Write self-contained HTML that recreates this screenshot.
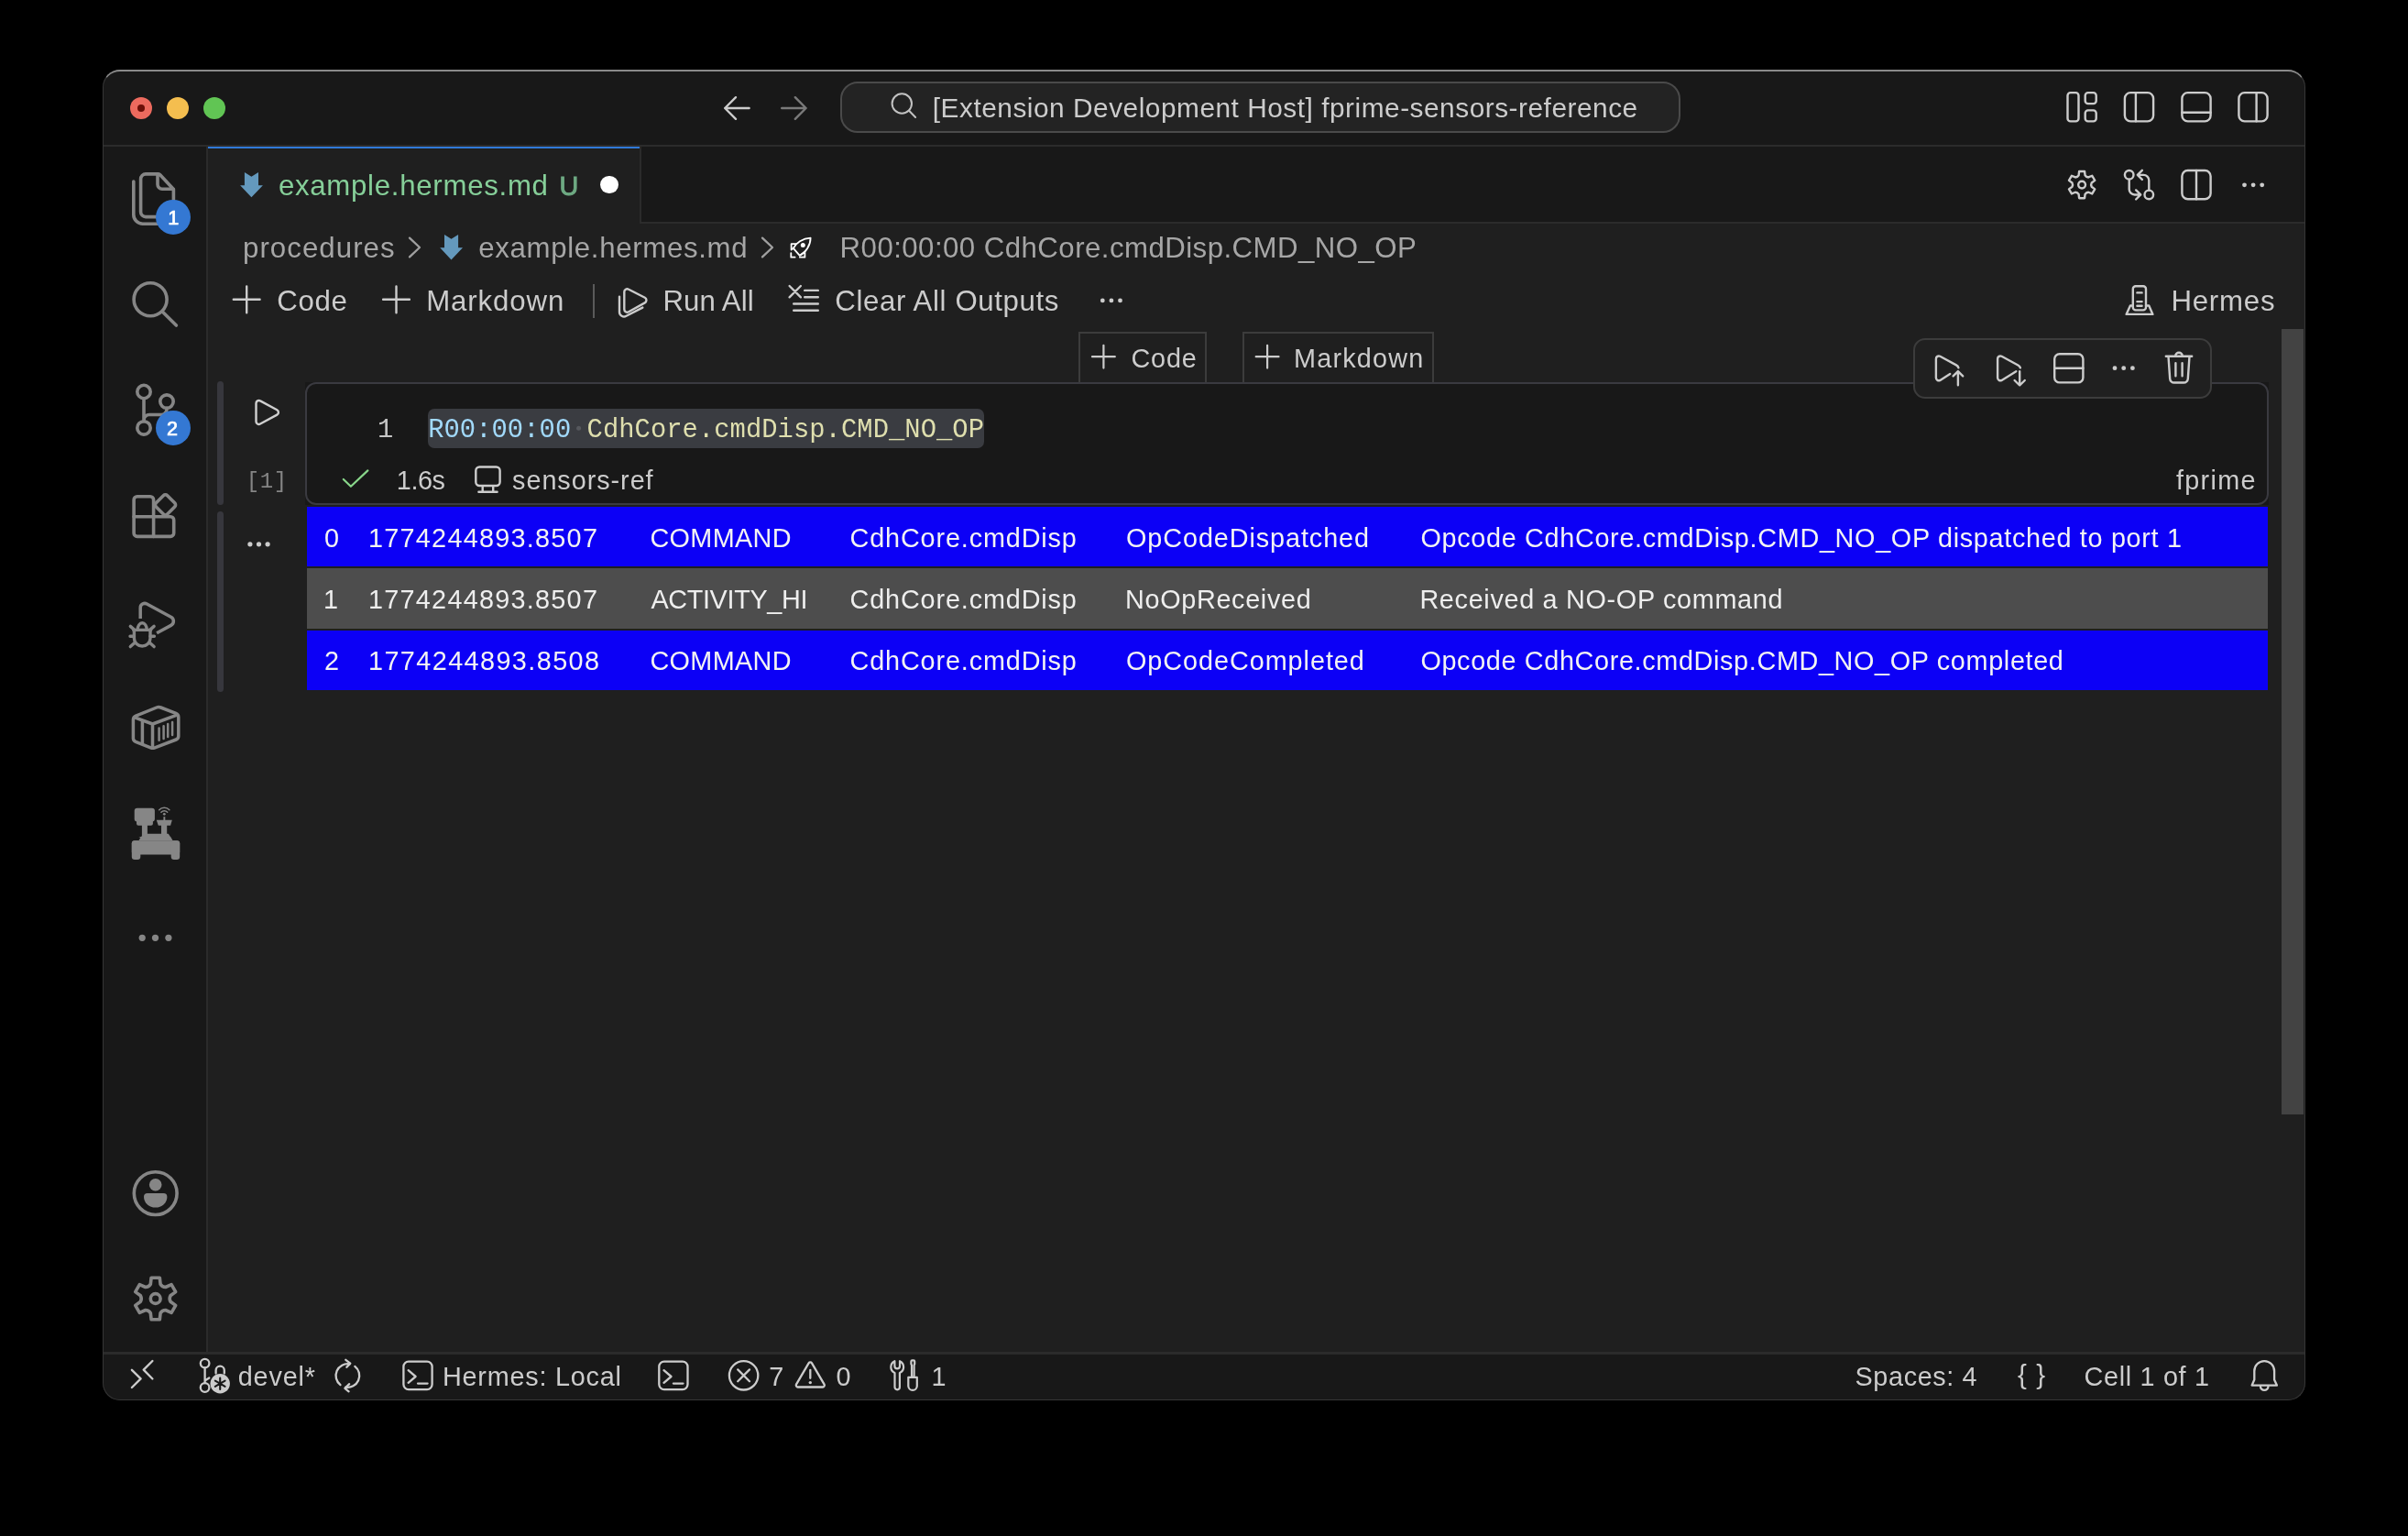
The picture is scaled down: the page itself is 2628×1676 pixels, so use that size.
<!DOCTYPE html>
<html><head><meta charset="utf-8"><title>VS Code</title>
<style>
html,body{margin:0;padding:0;background:#000;}
body{width:2628px;height:1676px;position:relative;overflow:hidden;font-family:'Liberation Sans', sans-serif;}
.b{position:absolute;box-sizing:border-box;}
.t{position:absolute;white-space:pre;margin:0;padding:0;}
svg.ic{position:absolute;left:0;top:0;}
#tx{position:absolute;left:0;top:0;width:2628px;height:1676px;will-change:transform;}
</style></head><body>
<!-- window -->
<div class="b" style="left:112px;top:76px;width:2404px;height:1452px;border-radius:19px;background:#181818;"></div>
<!-- editor area -->
<div class="b" style="left:227px;top:244px;width:2288px;height:1231px;background:#1f1f1f;"></div>
<!-- title bar bottom border -->
<div class="b" style="left:113px;top:157.7px;width:2402px;height:2.4px;background:#2b2b2b;"></div>
<!-- activity bar right border -->
<div class="b" style="left:224.8px;top:160px;width:2.4px;height:1315.2px;background:#2b2b2b;"></div>
<!-- tabs bar bottom border -->
<div class="b" style="left:700px;top:241.8px;width:1815px;height:2.4px;background:#2b2b2b;"></div>
<!-- active tab -->
<div class="b" style="left:227px;top:160px;width:471px;height:84px;background:#1f1f1f;"></div>
<div class="b" style="left:227px;top:159.8px;width:471px;height:2.4px;background:#3079d8;"></div>
<div class="b" style="left:697.8px;top:160px;width:2.4px;height:84.2px;background:#2b2b2b;"></div>
<!-- status bar top border -->
<div class="b" style="left:113px;top:1475.2px;width:2402px;height:2.4px;background:#2b2b2b;"></div>
<!-- window border overlay -->
<div class="b" style="left:112px;top:76px;width:2404px;height:1452px;border-radius:19px;border:1.5px solid #363636;border-top:2px solid #8a8a8a;"></div>
<!-- traffic lights -->
<div class="b" style="left:141.9px;top:106px;width:24px;height:24px;border-radius:50%;background:#ec6a5e;"></div>
<div class="b" style="left:149.9px;top:114px;width:8px;height:8px;border-radius:50%;background:#6b0f08;"></div>
<div class="b" style="left:182px;top:106px;width:24px;height:24px;border-radius:50%;background:#f4be4f;"></div>
<div class="b" style="left:222px;top:106px;width:24px;height:24px;border-radius:50%;background:#61c554;"></div>
<!-- command center -->
<div class="b" style="left:917px;top:89px;width:917px;height:56px;border-radius:19px;border:2px solid #4a4a4a;background:#232323;"></div>
<!-- tab modified dot -->
<div class="b" style="left:655px;top:191.8px;width:19.7px;height:19.7px;border-radius:50%;background:#ffffff;"></div>
<!-- toolbar separator -->
<div class="b" style="left:647px;top:309.5px;width:2px;height:37.5px;background:#5a5a5a;"></div>
<!-- scrollbar -->
<div class="b" style="left:2490px;top:359px;width:24px;height:857px;background:#434343;"></div>
<!-- cell focus bars -->
<div class="b" style="left:237.1px;top:416.3px;width:7px;height:135px;border-radius:3.5px;background:#37373d;"></div>
<div class="b" style="left:237.1px;top:558px;width:7px;height:197.3px;border-radius:3.5px;background:#37373d;"></div>
<!-- cell insert buttons -->
<div class="b" style="left:1177px;top:362px;width:140px;height:57px;border:2px solid #3c3c3c;border-bottom:none;background:#1f1f1f;"></div>
<div class="b" style="left:1356px;top:362px;width:209px;height:57px;border:2px solid #3c3c3c;border-bottom:none;background:#1f1f1f;"></div>
<!-- cell editor box -->
<div class="b" style="left:333px;top:417px;width:2142.5px;height:133.5px;background:#181818;"></div>
<div class="b" style="left:333px;top:417px;width:2142.5px;height:133.5px;border-radius:12px;border:2px solid #3a3a40;background:#181818;"></div>
<!-- selection -->
<div class="b" style="left:467.2px;top:446px;width:606.8px;height:42.5px;border-radius:7px;background:#3a3c41;"></div>
<!-- cell toolbar -->
<div class="b" style="left:2088px;top:369px;width:326px;height:65.5px;border-radius:13px;border:2px solid #3c3c3c;background:#202020;"></div>
<!-- output rows -->
<div class="b" style="left:335px;top:553px;width:2140px;height:65.1px;background:#0c00f6;"></div>
<div class="b" style="left:335px;top:619.9px;width:2140px;height:65.9px;background:#4d4d4d;"></div>
<div class="b" style="left:335px;top:687.9px;width:2140px;height:65px;background:#0c00f6;"></div>

<svg class="ic" width="2628" height="1676" viewBox="0 0 2628 1676">
<g fill="none" stroke="#cccccc" stroke-width="2.4" stroke-linecap="round" stroke-linejoin="round" ><path d="M817.6 118H791.2M803 106.2L791.2 118L803 129.8"/></g>
<g fill="none" stroke="#7a7a7a" stroke-width="2.4" stroke-linecap="round" stroke-linejoin="round" ><path d="M853.2 118H879.6M867.8 106.2L879.6 118L867.8 129.8"/></g>
<g fill="none" stroke="#c2c2c2" stroke-width="2.0" stroke-linecap="round" stroke-linejoin="round" ><circle cx="984.3" cy="113" r="10.7"/><path d="M992.1 120.8L999.1 128"/></g>
<g transform="translate(2252.90,97.55) scale(2.4)" fill="none" stroke="#cccccc" stroke-width="1" stroke-linecap="round" stroke-linejoin="round"><rect x="1.5" y="1.5" width="5" height="13" rx="1.3"/><rect x="9.5" y="1.5" width="5" height="5" rx="1.3"/><rect x="9.5" y="9.5" width="5" height="5" rx="1.3"/></g>
<g transform="translate(2315.30,97.55) scale(2.4)" fill="none" stroke="#cccccc" stroke-width="1" stroke-linecap="round" stroke-linejoin="round"><rect x="1.5" y="1.5" width="13" height="13" rx="2.6"/><path d="M6.5 1.5V14.5"/></g>
<g transform="translate(2377.80,97.55) scale(2.4)" fill="none" stroke="#cccccc" stroke-width="1" stroke-linecap="round" stroke-linejoin="round"><rect x="1.5" y="1.5" width="13" height="13" rx="2.6"/><path d="M1.5 10.5H14.5"/></g>
<g transform="translate(2439.80,97.55) scale(2.4)" fill="none" stroke="#cccccc" stroke-width="1" stroke-linecap="round" stroke-linejoin="round"><rect x="1.5" y="1.5" width="13" height="13" rx="2.6"/><path d="M9.5 1.5V14.5"/></g>
<g fill="none" stroke="#cccccc" stroke-width="2.4" stroke-linecap="round" stroke-linejoin="round" ><path d="M2268.60 191.38 L2269.14 187.00 L2275.06 187.00 L2275.60 191.38 Q2276.85 193.37 2279.20 193.46 L2283.27 191.73 L2286.23 196.86 L2282.70 199.52 Q2281.60 201.60 2282.70 203.68 L2286.23 206.34 L2283.27 211.47 L2279.20 209.74 Q2276.85 209.83 2275.60 211.82 L2275.06 216.20 L2269.14 216.20 L2268.60 211.82 Q2267.35 209.83 2265.00 209.74 L2260.93 211.47 L2257.97 206.34 L2261.50 203.68 Q2262.60 201.60 2261.50 199.52 L2257.97 196.86 L2260.93 191.73 L2265.00 193.46 Q2267.35 193.37 2268.60 191.38Z"/><circle cx="2272.1" cy="201.6" r="3.9"/></g>
<g transform="translate(2315.30,182.45) scale(2.4)" fill="none" stroke="#cccccc" stroke-width="1" stroke-linecap="round" stroke-linejoin="round"><circle cx="3.5" cy="3.5" r="2"/><circle cx="12.5" cy="12.5" r="2"/><path d="M3.5 5.5V10a2.5 2.5 0 0 0 2.5 2.5H8.7M6.6 10.4L8.7 12.5L6.6 14.6"/><path d="M12.5 10.5V6a2.5 2.5 0 0 0 -2.5 -2.5H7.3M9.4 1.4L7.3 3.5L9.4 5.6"/></g>
<g transform="translate(2377.80,182.45) scale(2.4)" fill="none" stroke="#cccccc" stroke-width="1" stroke-linecap="round" stroke-linejoin="round"><rect x="1.5" y="1.5" width="13" height="13" rx="2.6"/><path d="M8 1.5V14.5"/></g>
<g fill="#cccccc"><circle cx="2449.5" cy="201.8" r="2.4"/><circle cx="2459.1" cy="201.8" r="2.4"/><circle cx="2468.7" cy="201.8" r="2.4"/></g>
<g fill="none" stroke="#868686" stroke-width="3.6" stroke-linecap="round" stroke-linejoin="round" ><path d="M172 189.9H159a5.4 5.4 0 0 0 -5.4 5.4V231.2a5.4 5.4 0 0 0 5.4 5.4H184a5.4 5.4 0 0 0 5.4 -5.4V206.5L174.5 190.6a3 3 0 0 0 -2.5 -0.7V201.2a5 5 0 0 0 5 5H189.4"/><path d="M145.8 198V234.2a10 10 0 0 0 10 10H182"/></g>
<g fill="none" stroke="#868686" stroke-width="3.6" stroke-linecap="round" stroke-linejoin="round" ><circle cx="164.1" cy="326.8" r="18"/><path d="M177.2 339.9L192.4 355.1"/></g>
<g fill="none" stroke="#868686" stroke-width="3.6" stroke-linecap="round" stroke-linejoin="round" ><circle cx="157" cy="427.5" r="7.2"/><circle cx="182" cy="438.1" r="7.2"/><circle cx="157" cy="466.9" r="7.2"/><path d="M157 434.7V459.7M182 445.3v1.2a6 6 0 0 1 -6 6H163a6 6 0 0 0 -6 6"/></g>
<g fill="none" stroke="#868686" stroke-width="3.6" stroke-linecap="round" stroke-linejoin="round" ><path d="M146.1 545.4a3.6 3.6 0 0 1 3.6 -3.6H164a3.6 3.6 0 0 1 3.6 3.6V563.8H186.1a3.6 3.6 0 0 1 3.6 3.6V581.8a3.6 3.6 0 0 1 -3.6 3.6H149.7a3.6 3.6 0 0 1 -3.6 -3.6Z"/><path d="M146.1 563.8H167.6V585.4"/><rect x="-8.7" y="-8.7" width="17.4" height="17.4" rx="3" transform="translate(180.5,550.9) rotate(45)"/></g>
<g fill="none" stroke="#868686" stroke-width="3.5" stroke-linecap="round" stroke-linejoin="round" stroke-linecap="butt" style="stroke-linecap:butt"><path d="M153.2 675V663.2a4.8 4.8 0 0 1 7.1 -4.2L186.6 673.2a5.2 5.2 0 0 1 0 9.2L171.1 690.8"/></g>
<g fill="none" stroke="#868686" stroke-width="3.4" stroke-linecap="round" stroke-linejoin="round" ><path d="M150.2 687a5 7.3 0 0 1 10 0"/><path d="M145.8 687.4H164.6"/><path d="M146.4 687.4V696.4a8.8 8.6 0 0 0 17.6 0V687.4"/><path d="M142.3 683.4L146 686.6M142 694.2H146.4M142.3 705.6L146.8 701.6M168.1 683.4L164.4 686.6M168.4 694.2H164M168.1 705.6L163.6 701.6"/></g>
<g fill="none" stroke="#868686" stroke-width="3.5" stroke-linecap="round" stroke-linejoin="round" ><path d="M145.4 785.5Q145.4 782.3 148.3 781.1L170.9 772Q173.2 771.1 175.5 772L192 778.4Q194.8 779.5 194.8 782.6V803.2Q194.8 806 192.2 807L169 815.8Q166.7 816.7 164.4 815.8L148 809.3Q145.4 808.3 145.4 805.5Z"/><path d="M147 782.8L166.5 790L193.2 780.2M166.5 790V816.2M155.4 786.6V811.6"/><path d="M173.6 794.4V807.8M178.6 792.3V806M183.2 790V804M188.1 788.1V801.9" stroke-width="2.5"/></g>
<g fill="#868686" stroke="none"><rect x="146.7" y="881.8" width="22.2" height="14.6" rx="3"/><rect x="149" y="894" width="17.9" height="6.7" rx="2"/><rect x="154.9" y="899" width="6" height="16"/><path d="M170.8 894.8H187.8L186.1 900.7H172.8Z"/><rect x="176" y="900" width="6.2" height="12"/><rect x="178.4" y="891.2" width="1.9" height="4"/><circle cx="179.3" cy="888.3" r="1.4"/><path d="M160.9 909.8H183.8L186.5 914H151.3Z"/><path d="M151.3 917.5L153.5 913.6H186.5L188.7 917.5Z"/><rect x="143.8" y="917.2" width="52.4" height="15.4" rx="3"/><rect x="143.8" y="917.2" width="9.5" height="20.8" rx="3.2"/><rect x="186.7" y="917.2" width="9.5" height="20.8" rx="3.2"/></g>
<g fill="none" stroke="#868686" stroke-width="1.5" stroke-linecap="round" stroke-linejoin="round" ><path d="M175.9 886.2a4.6 4.6 0 0 1 6.8 0M173.7 883.8a7.6 7.6 0 0 1 11.2 0" /></g>
<g fill="#868686"><circle cx="155.2" cy="1023.3" r="3.6"/><circle cx="169.5" cy="1023.3" r="3.6"/><circle cx="183.9" cy="1023.3" r="3.6"/></g>
<g fill="none" stroke="#868686" stroke-width="3.6" stroke-linecap="round" stroke-linejoin="round" ><circle cx="169.7" cy="1302.1" r="23.4"/></g>
<g fill="#868686"><circle cx="169.7" cy="1292.7" r="6.8"/><path d="M157 1306a3.9 3.9 0 0 1 3.9 -3.9H178.5a3.9 3.9 0 0 1 3.9 3.9a12.7 11.6 0 0 1 -25.4 0Z"/></g>
<g fill="none" stroke="#868686" stroke-width="3.6" stroke-linecap="round" stroke-linejoin="round" ><path d="M164.32 1401.30 L165.09 1394.26 L174.31 1394.26 L175.08 1401.30 Q177.00 1404.35 180.61 1404.49 L187.09 1401.64 L191.70 1409.62 L185.99 1413.81 Q184.31 1417.00 185.99 1420.19 L191.70 1424.38 L187.09 1432.36 L180.61 1429.51 Q177.00 1429.65 175.08 1432.70 L174.31 1439.74 L165.09 1439.74 L164.32 1432.70 Q162.40 1429.65 158.79 1429.51 L152.31 1432.36 L147.70 1424.38 L153.41 1420.19 Q155.09 1417.00 153.41 1413.81 L147.70 1409.62 L152.31 1401.64 L158.79 1404.49 Q162.40 1404.35 164.32 1401.30Z"/><circle cx="169.7" cy="1417" r="5.4"/></g>
<circle cx="189" cy="236.9" r="19" fill="#3478d3"/><circle cx="189" cy="466.9" r="19" fill="#3478d3"/>
<polygon points="262.1,202.2 266.9,202.2 266.9,187.9 274.4,192.7 282,187.9 282,202.2 286.9,202.2 274.4,215.3" fill="#6499bd"/>
<polygon points="262.1,202.2 266.9,202.2 266.9,187.9 274.4,192.7 282,187.9 282,202.2 286.9,202.2 274.4,215.3" fill="#6499bd" transform="translate(218.1,68.1)"/>
<g fill="none" stroke="#a0a0a0" stroke-width="2.3" stroke-linecap="round" stroke-linejoin="round" ><path d="M447 259.6L458 270L447 280.4"/></g>
<g fill="none" stroke="#a0a0a0" stroke-width="2.3" stroke-linecap="round" stroke-linejoin="round" ><path d="M832 259.6L843 270L832 280.4"/></g>
<g fill="none" stroke="#ffffff" stroke-width="1.8" stroke-linecap="round" stroke-linejoin="round" ><path d="M884.6 259.6C876 260 868.5 265.5 865.8 270.8L872.8 278.8C879 276 884.6 268 884.6 259.6Z"/><path d="M868.6 266.2H863.6V272.6L866.4 270.6M873.4 278.4L878.4 274.5V280.7H872.9"/><path d="M863.3 276.2V280.7H867.6"/></g>
<circle cx="876.3" cy="267.6" r="2.5" fill="#ffffff"/>
<g fill="none" stroke="#cccccc" stroke-width="2.4" stroke-linecap="round" stroke-linejoin="round" ><path d="M254.79999999999998 326.8H283.59999999999997M269.2 312.40000000000003V341.2"/></g>
<g fill="none" stroke="#cccccc" stroke-width="2.4" stroke-linecap="round" stroke-linejoin="round" ><path d="M418.1 326.8H446.9M432.5 312.40000000000003V341.2"/></g>
<g fill="none" stroke="#cccccc" stroke-width="2.4" stroke-linecap="round" stroke-linejoin="round" ><path d="M681.3 318.5a3.2 3.2 0 0 1 4.8 -2.8L703.8 324.8a3.2 3.2 0 0 1 0 5.6L686.1 340.3a3.2 3.2 0 0 1 -4.8 -2.8Z"/><path d="M676 323.6V340.5a5 5 0 0 0 7.5 4.3L701.3 335.6"/></g>
<g fill="none" stroke="#cccccc" stroke-width="2.4" stroke-linecap="round" stroke-linejoin="round" ><path d="M861.6 312L873.9 324.3M873.9 312L861.6 324.3M878.2 316.9H892.8M878.2 324.2H892.8M866.2 331.5H892.8M866.2 338.8H892.8"/></g>
<g fill="#cccccc"><circle cx="1203.3" cy="327.9" r="2.4"/><circle cx="1212.9" cy="327.9" r="2.4"/><circle cx="1222.5" cy="327.9" r="2.4"/></g>
<g fill="none" stroke="#cccccc" stroke-width="2.4" stroke-linecap="round" stroke-linejoin="round" ><rect x="2327.8" y="312.2" width="14.2" height="26.2" rx="3"/><path d="M2332.4 319.4H2337.6M2332.4 329.1H2337.6M2332.4 333.8H2337.6"/><path d="M2327.8 333.5H2324.9L2320.6 342.9H2349.4L2345.3 333.5H2342"/></g>
<g fill="none" stroke="#cccccc" stroke-width="2.2" stroke-linecap="round" stroke-linejoin="round" ><path d="M1192.0 389.2H1216.8000000000002M1204.4 376.8V401.59999999999997"/></g>
<g fill="none" stroke="#cccccc" stroke-width="2.2" stroke-linecap="round" stroke-linejoin="round" ><path d="M1370.6999999999998 389.2H1395.5M1383.1 376.8V401.59999999999997"/></g>
<g fill="none" stroke="#cccccc" stroke-width="2.4" stroke-linecap="round" stroke-linejoin="round" ><path d="M2112.9 391.5a3 3 0 0 1 4.4 -2.7L2135 398.4Q2137 399.5 2137.4 401.3M2112.9 391.5V412.3a3 3 0 0 0 4.5 2.6L2128.2 407.9"/><path d="M2136.9 420.2V405.4M2131.6 410.4L2136.9 405.1L2142.2 410.4"/></g>
<g fill="none" stroke="#cccccc" stroke-width="2.4" stroke-linecap="round" stroke-linejoin="round" ><path d="M2180.1 391.5a3 3 0 0 1 4.4 -2.7L2202.4 398.5Q2204.4 399.6 2204.9 401.3M2180.1 391.5V412.3a3 3 0 0 0 4.5 2.6L2200.3 405.2"/><path d="M2204.2 405.2V420.2M2198.6 415L2204.2 420.5L2209.8 415"/></g>
<g fill="none" stroke="#cccccc" stroke-width="2.4" stroke-linecap="round" stroke-linejoin="round" ><rect x="2242.2" y="386.2" width="31.2" height="31.2" rx="5.5"/><path d="M2242.2 401.8H2273.4"/></g>
<g fill="#cccccc"><circle cx="2308" cy="401.7" r="2.4"/><circle cx="2317.7" cy="401.7" r="2.4"/><circle cx="2327.4" cy="401.7" r="2.4"/></g>
<g fill="none" stroke="#cccccc" stroke-width="2.4" stroke-linecap="round" stroke-linejoin="round" ><path d="M2363.8 388.7H2392.2M2374.2 388.5a3.8 3.8 0 0 1 7.6 0M2366.5 388.9L2368.2 413.3a4.6 4.6 0 0 0 4.6 4.2H2383.2a4.6 4.6 0 0 0 4.6 -4.2L2389.5 388.9M2374.4 396.3V410.2M2381.6 396.3V410.2"/></g>
<g fill="none" stroke="#d0d0d0" stroke-width="2.4" stroke-linecap="round" stroke-linejoin="round" ><path d="M279.5 440a3 3 0 0 1 4.5 -2.6L302.3 447.3a3 3 0 0 1 0 5.3L284 462.5a3 3 0 0 1 -4.5 -2.6Z"/></g>
<g fill="none" stroke="#88d68a" stroke-width="2.2" stroke-linecap="round" stroke-linejoin="round" ><path d="M374.8 523L382.9 530.8L401.4 513.4"/></g>
<g fill="none" stroke="#cccccc" stroke-width="2.4" stroke-linecap="round" stroke-linejoin="round" ><rect x="519.3" y="509.5" width="26.3" height="20.5" rx="4"/><path d="M526.7 530.5V536.6M538.2 530.5V536.6M522.4 536.7H542.6"/></g>
<circle cx="631.6" cy="467.3" r="2.5" fill="#56585d"/>
<g fill="#cccccc"><circle cx="272.9" cy="593.8" r="2.6"/><circle cx="282.5" cy="593.8" r="2.6"/><circle cx="292.1" cy="593.8" r="2.6"/></g><g fill="none" stroke="#cccccc" stroke-width="2.4" stroke-linecap="round" stroke-linejoin="round" ><path d="M143.9 1494.8L153.6 1504.4L143.9 1514M166.4 1485L156.7 1494.7L166.4 1504.5"/></g>
<g fill="none" stroke="#cccccc" stroke-width="2.3" stroke-linecap="round" stroke-linejoin="round" ><circle cx="223.6" cy="1487.6" r="4.8"/><circle cx="223.6" cy="1514" r="4.8"/><path d="M223.6 1492.4V1509.2M223.6 1506.5L228.3 1503.5"/></g>
<g fill="none" stroke="#cccccc" stroke-width="2.3" stroke-linecap="round" stroke-linejoin="round" ><path d="M235.6 1498.5V1495.3a4.6 4.6 0 0 1 9.2 0V1498.5"/></g>
<circle cx="240.2" cy="1509.7" r="10.7" fill="#cccccc"/>
<g fill="none" stroke="#181818" stroke-width="2.1" stroke-linecap="round" stroke-linejoin="round" ><path d="M240.2 1509.7L240.20 1503.50M240.2 1509.7L245.57 1506.60M240.2 1509.7L245.57 1512.80M240.2 1509.7L240.20 1515.90M240.2 1509.7L234.83 1512.80M240.2 1509.7L234.83 1506.60"/></g>
<g fill="none" stroke="#cccccc" stroke-width="2.3" stroke-linecap="round" stroke-linejoin="round" ><path d="M381.6 1488.4A12.8 12.8 0 0 0 371.5 1511.1M377.2 1513.6A12.8 12.8 0 0 0 387.3 1490.9"/><path d="M377.3 1483.8L382.3 1487.6L378.4 1491.8M381.2 1510.2L376.4 1514.8L380.6 1518.3"/></g>
<g fill="none" stroke="#cccccc" stroke-width="2.3" stroke-linecap="round" stroke-linejoin="round" ><rect x="440.4" y="1485.6" width="31.2" height="30.5" rx="5.5"/><path d="M445.6 1495.2L453.6 1502L445.6 1508.8M456 1509.6H466.6"/></g>
<g fill="none" stroke="#cccccc" stroke-width="2.3" stroke-linecap="round" stroke-linejoin="round" ><rect x="719.3" y="1485.6" width="31.2" height="30.5" rx="5.5"/><path d="M724.5 1495.2L732.5 1502L724.5 1508.8M734.9 1509.6H745.5"/></g>
<g fill="none" stroke="#cccccc" stroke-width="2.3" stroke-linecap="round" stroke-linejoin="round" ><circle cx="811.6" cy="1500.8" r="15.7"/><path d="M805.2 1494.4L818 1507.2M818 1494.4L805.2 1507.2"/></g>
<g fill="none" stroke="#cccccc" stroke-width="2.3" stroke-linecap="round" stroke-linejoin="round" ><path d="M882.6 1487.3a2 2 0 0 1 3.4 0L899.6 1510.6a2 2 0 0 1 -1.7 2.9H870.7a2 2 0 0 1 -1.7 -2.9Z"/><path d="M884.3 1494.8V1503.8"/></g>
<circle cx="884.3" cy="1508.6" r="1.7" fill="#cccccc"/>
<g fill="none" stroke="#cccccc" stroke-width="2.2" stroke-linecap="round" stroke-linejoin="round" ><path d="M976.4 1485.2a7 7 0 0 0 0.1 12.8V1513.6a2.7 2.7 0 0 0 5.4 0V1498a7 7 0 0 0 0.1 -12.8V1490.5a2.8 2.8 0 0 1 -5.6 0Z"/></g>
<g fill="none" stroke="#cccccc" stroke-width="2.2" stroke-linecap="round" stroke-linejoin="round" ><path d="M994.4 1485.6a1.2 1.2 0 0 1 1.2 -1.2H997a1.2 1.2 0 0 1 1.2 1.2V1488.2L997.6 1489.6V1502.6H995V1489.6L994.4 1488.2Z"/><path d="M991.3 1502.8H1000.8V1512.2a4.7 4.7 0 0 1 -9.5 0Z"/></g>
<g fill="none" stroke="#cccccc" stroke-width="2.3" stroke-linecap="round" stroke-linejoin="round" ><path d="M2460.3 1505.5V1496a10.9 10.9 0 0 1 21.8 0V1505.5L2484.9 1511.6H2457.6Z"/><path d="M2466.9 1512.6a4.3 4.3 0 0 0 8.6 0"/></g>
</svg>
<div id="tx">
<span class="t" style="left:1017.80px;top:103px;font:400 29.8px/1 'Liberation Sans', sans-serif;color:#cccccc;letter-spacing:0.528px">[Extension Development Host] fprime-sensors-reference</span>
<span class="t" style="left:303.90px;top:187px;font:400 31.2px/1 'Liberation Sans', sans-serif;color:#86cf99;letter-spacing:0.720px">example.hermes.md</span>
<span class="t" style="left:610.40px;top:189px;font:400 28.8px/1 'Liberation Sans', sans-serif;color:#6eaa83;letter-spacing:0.000px;-webkit-text-stroke:0.9px #6eaa83">U</span>
<span class="t" style="left:265.00px;top:255px;font:400 31.2px/1 'Liberation Sans', sans-serif;color:#a6a6a6;letter-spacing:1.063px">procedures</span>
<span class="t" style="left:522.20px;top:255px;font:400 31.2px/1 'Liberation Sans', sans-serif;color:#a6a6a6;letter-spacing:0.682px">example.hermes.md</span>
<span class="t" style="left:916.60px;top:255px;font:400 31.2px/1 'Liberation Sans', sans-serif;color:#a6a6a6;letter-spacing:0.459px">R00:00:00 CdhCore.cmdDisp.CMD_NO_OP</span>
<span class="t" style="left:302.20px;top:313px;font:400 31.2px/1 'Liberation Sans', sans-serif;color:#cccccc;letter-spacing:0.696px">Code</span>
<span class="t" style="left:465.20px;top:313px;font:400 31.2px/1 'Liberation Sans', sans-serif;color:#cccccc;letter-spacing:0.898px">Markdown</span>
<span class="t" style="left:723.40px;top:313px;font:400 31.2px/1 'Liberation Sans', sans-serif;color:#cccccc;letter-spacing:0.082px">Run All</span>
<span class="t" style="left:911.30px;top:313px;font:400 31.2px/1 'Liberation Sans', sans-serif;color:#cccccc;letter-spacing:0.629px">Clear All Outputs</span>
<span class="t" style="left:2369.40px;top:313px;font:400 31.2px/1 'Liberation Sans', sans-serif;color:#cccccc;letter-spacing:0.804px">Hermes</span>
<span class="t" style="left:1234.50px;top:377px;font:400 28.8px/1 'Liberation Sans', sans-serif;color:#cccccc;letter-spacing:0.791px">Code</span>
<span class="t" style="left:1412.00px;top:377px;font:400 28.8px/1 'Liberation Sans', sans-serif;color:#cccccc;letter-spacing:1.197px">Markdown</span>
<span class="t" style="left:412.00px;top:456px;font:400 28.8px/1 'Liberation Mono', monospace;color:#c6c6c6;letter-spacing:0.000px">1</span>
<span class="t" style="left:467.20px;top:456px;font:400 28.8px/1 'Liberation Mono', monospace;color:#a2dafb;letter-spacing:0.056px">R00:00:00</span>
<span class="t" style="left:640.57px;top:456px;font:400 28.8px/1 'Liberation Mono', monospace;color:#dfdfae;letter-spacing:0.056px">CdhCore.cmdDisp.CMD_NO_OP</span>
<span class="t" style="left:268.80px;top:514px;font:400 24px/1 'Liberation Mono', monospace;color:#858585;letter-spacing:0.548px">[1]</span>
<span class="t" style="left:432.80px;top:510px;font:400 28.8px/1 'Liberation Sans', sans-serif;color:#cccccc;letter-spacing:-0.411px">1.6s</span>
<span class="t" style="left:559.10px;top:510px;font:400 28.8px/1 'Liberation Sans', sans-serif;color:#cccccc;letter-spacing:0.947px">sensors-ref</span>
<span class="t" style="left:2375.00px;top:510px;font:400 28.8px/1 'Liberation Sans', sans-serif;color:#cccccc;letter-spacing:1.302px">fprime</span>
<span class="t" style="left:353.90px;top:573px;font:400 28.8px/1 'Liberation Sans', sans-serif;color:#f4f4f4;letter-spacing:0.000px">0</span>
<span class="t" style="left:402.00px;top:573px;font:400 28.8px/1 'Liberation Sans', sans-serif;color:#f4f4f4;letter-spacing:1.264px">1774244893.8507</span>
<span class="t" style="left:709.40px;top:573px;font:400 28.8px/1 'Liberation Sans', sans-serif;color:#f4f4f4;letter-spacing:0.354px">COMMAND</span>
<span class="t" style="left:927.50px;top:573px;font:400 28.8px/1 'Liberation Sans', sans-serif;color:#f4f4f4;letter-spacing:0.862px">CdhCore.cmdDisp</span>
<span class="t" style="left:1229.00px;top:573px;font:400 28.8px/1 'Liberation Sans', sans-serif;color:#f4f4f4;letter-spacing:0.913px">OpCodeDispatched</span>
<span class="t" style="left:1550.40px;top:573px;font:400 28.8px/1 'Liberation Sans', sans-serif;color:#f4f4f4;letter-spacing:0.685px">Opcode CdhCore.cmdDisp.CMD_NO_OP dispatched to port 1</span>
<span class="t" style="left:352.90px;top:640px;font:400 28.8px/1 'Liberation Sans', sans-serif;color:#eeeeee;letter-spacing:0.000px">1</span>
<span class="t" style="left:402.00px;top:640px;font:400 28.8px/1 'Liberation Sans', sans-serif;color:#eeeeee;letter-spacing:1.264px">1774244893.8507</span>
<span class="t" style="left:710.40px;top:640px;font:400 28.8px/1 'Liberation Sans', sans-serif;color:#eeeeee;letter-spacing:-0.341px">ACTIVITY_HI</span>
<span class="t" style="left:927.50px;top:640px;font:400 28.8px/1 'Liberation Sans', sans-serif;color:#eeeeee;letter-spacing:0.862px">CdhCore.cmdDisp</span>
<span class="t" style="left:1228.00px;top:640px;font:400 28.8px/1 'Liberation Sans', sans-serif;color:#eeeeee;letter-spacing:0.676px">NoOpReceived</span>
<span class="t" style="left:1549.40px;top:640px;font:400 28.8px/1 'Liberation Sans', sans-serif;color:#eeeeee;letter-spacing:0.683px">Received a NO-OP command</span>
<span class="t" style="left:353.90px;top:707px;font:400 28.8px/1 'Liberation Sans', sans-serif;color:#f4f4f4;letter-spacing:0.000px">2</span>
<span class="t" style="left:402.00px;top:707px;font:400 28.8px/1 'Liberation Sans', sans-serif;color:#f4f4f4;letter-spacing:1.414px">1774244893.8508</span>
<span class="t" style="left:709.40px;top:707px;font:400 28.8px/1 'Liberation Sans', sans-serif;color:#f4f4f4;letter-spacing:0.354px">COMMAND</span>
<span class="t" style="left:927.50px;top:707px;font:400 28.8px/1 'Liberation Sans', sans-serif;color:#f4f4f4;letter-spacing:0.862px">CdhCore.cmdDisp</span>
<span class="t" style="left:1229.00px;top:707px;font:400 28.8px/1 'Liberation Sans', sans-serif;color:#f4f4f4;letter-spacing:0.950px">OpCodeCompleted</span>
<span class="t" style="left:1550.40px;top:707px;font:400 28.8px/1 'Liberation Sans', sans-serif;color:#f4f4f4;letter-spacing:0.649px">Opcode CdhCore.cmdDisp.CMD_NO_OP completed</span>
<span class="t" style="left:259.80px;top:1488px;font:400 28.8px/1 'Liberation Sans', sans-serif;color:#cccccc;letter-spacing:0.811px">devel*</span>
<span class="t" style="left:483.00px;top:1488px;font:400 28.8px/1 'Liberation Sans', sans-serif;color:#cccccc;letter-spacing:0.763px">Hermes: Local</span>
<span class="t" style="left:839.20px;top:1488px;font:400 28.8px/1 'Liberation Sans', sans-serif;color:#cccccc;letter-spacing:0.000px">7</span>
<span class="t" style="left:912.50px;top:1488px;font:400 28.8px/1 'Liberation Sans', sans-serif;color:#cccccc;letter-spacing:0.000px">0</span>
<span class="t" style="left:1016.40px;top:1488px;font:400 28.8px/1 'Liberation Sans', sans-serif;color:#cccccc;letter-spacing:0.000px">1</span>
<span class="t" style="left:2024.50px;top:1488px;font:400 28.8px/1 'Liberation Sans', sans-serif;color:#cccccc;letter-spacing:0.631px">Spaces: 4</span>
<span class="t" style="left:2274.60px;top:1488px;font:400 28.8px/1 'Liberation Sans', sans-serif;color:#cccccc;letter-spacing:0.666px">Cell 1 of 1</span>
<span class="t" style="left:2202.00px;top:1485px;font:400 29.5px/1 'Liberation Sans', sans-serif;color:#cccccc;letter-spacing:0.000px">{</span>
<span class="t" style="left:2222.20px;top:1485px;font:400 29.5px/1 'Liberation Sans', sans-serif;color:#cccccc;letter-spacing:0.000px">}</span>
<span class="t" style="left:183.20px;top:227px;font:400 21.6px/1 'Liberation Sans', sans-serif;color:#ffffff;letter-spacing:0.000px;-webkit-text-stroke:0.7px #ffffff">1</span>
<span class="t" style="left:182.10px;top:457px;font:400 21.6px/1 'Liberation Sans', sans-serif;color:#ffffff;letter-spacing:0.000px;-webkit-text-stroke:0.7px #ffffff">2</span>
</div>
</body></html>
